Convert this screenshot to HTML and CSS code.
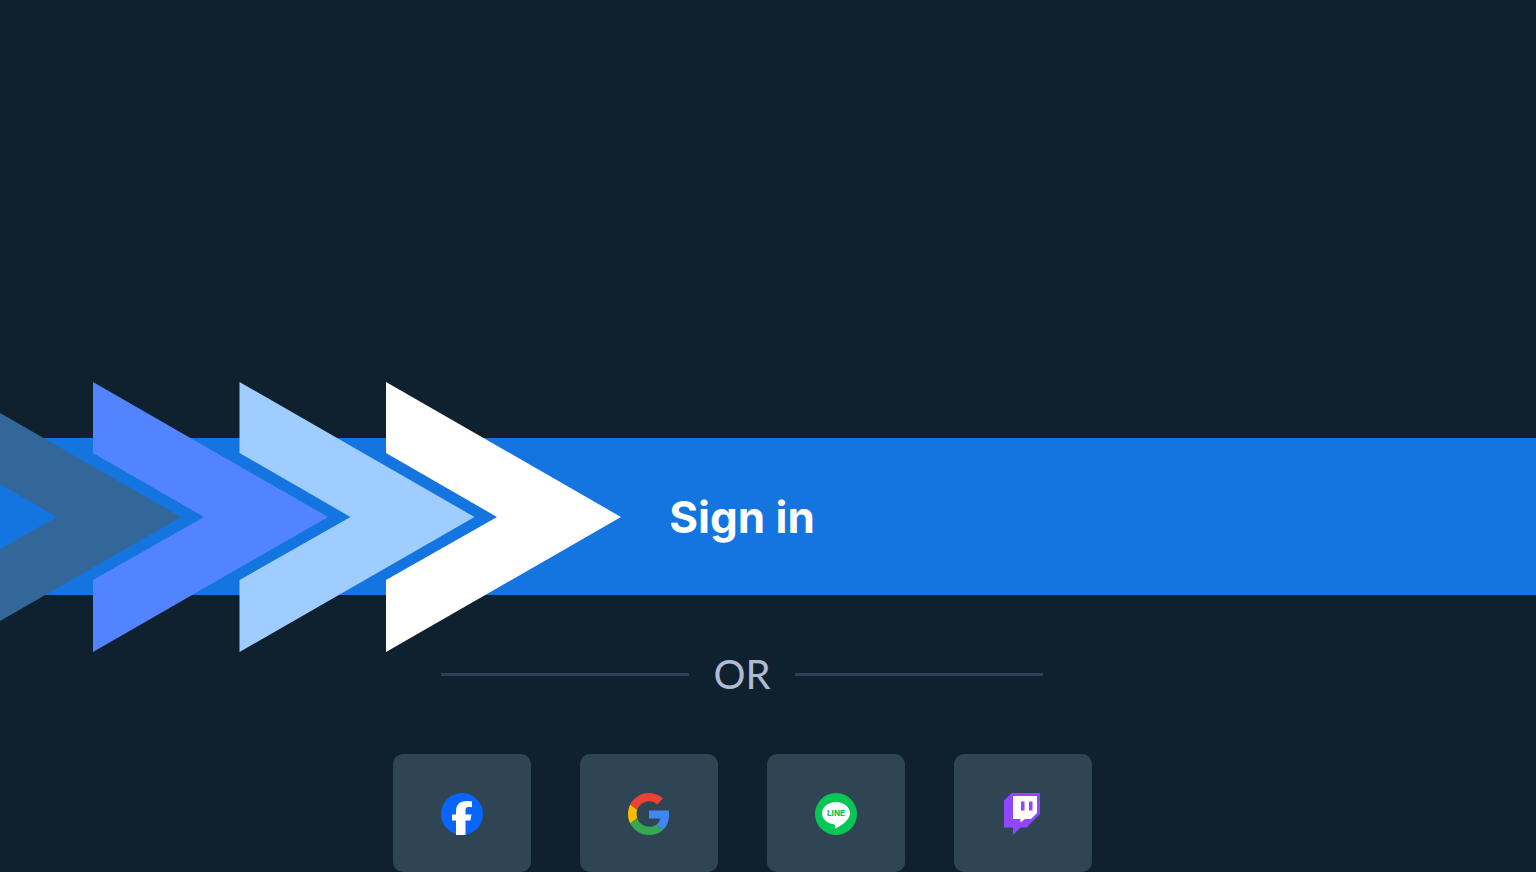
FILE: index.html
```
<!DOCTYPE html>
<html lang="en">
<head>
    <meta charset="UTF-8">
    <meta name="viewport" content="width=device-width, initial-scale=1.0">
    <title>Sign in</title>
    <link rel="stylesheet" href="styles.css">
</head>
<body>

<main class="login">
    <div class="signin">
        <button type="submit" class="signin-button">Sign in</button>

        <!-- Arrows pointing at the button label -->
        <svg class="arrows" viewBox="0 0 621 270" aria-hidden="true">
            <path fill="#336799" d="M-54 0L181 135L-54 270V198L57 135L-54 71Z"/>
            <path fill="#5384ff" d="M93 0L328 135L93 270V198L204 135L93 71Z"/>
            <path fill="#a0cdff" d="M239.500 0L474.500 135L239.500 270V198L350.500 135L239.500 71Z"/>
            <path fill="#ffffff" d="M386 0L621 135L386 270V198L497 135L386 71Z"/>
        </svg>
    </div>

    <div class="divider">OR</div>

    <!-- Social login -->
    <div class="social">
        <button type="button" class="social-button" aria-label="Sign in with Facebook">
            <svg viewBox="0 0 42 42">
                <circle cx="21" cy="21" r="21" fill="#0866ff"/>
                <path fill="#fff" d="M15 42V27.500H11V21.500H15V19C15 11.500 18.500 8 26 8C28 8 30 8.200 31 8.600V14.300C30 14.100 29 14 28 14C25 14 24.500 15.200 24.500 18.500V21.500H30.500L29.400 27.500H24.500V42Z"/>
            </svg>
        </button>
        <button type="button" class="social-button" aria-label="Sign in with Google">
            <svg viewBox="0 0 48 48">
                <path fill="#ea4335" d="M24 9.500c3.540 0 6.710 1.220 9.210 3.600l6.850-6.850C35.900 2.380 30.470 0 24 0 14.620 0 6.510 5.380 2.560 13.220l7.980 6.190C12.430 13.720 17.740 9.500 24 9.500z"/>
                <path fill="#4285f4" d="M46.980 24.550c0-1.570-.15-3.090-.38-4.550H24v9.020h12.940c-.58 2.960-2.260 5.480-4.780 7.180l7.730 6c4.510-4.180 7.090-10.360 7.090-17.650z"/>
                <path fill="#fbbc05" d="M10.530 28.590c-.48-1.450-.76-2.990-.76-4.590s.27-3.140.76-4.590l-7.980-6.190C.92 16.460 0 20.120 0 24c0 3.880.92 7.540 2.560 10.780l7.970-6.190z"/>
                <path fill="#34a853" d="M24 48c6.480 0 11.930-2.130 15.890-5.810l-7.730-6c-2.150 1.450-4.920 2.300-8.160 2.300-6.260 0-11.570-4.220-13.470-9.910l-7.980 6.190C6.510 42.620 14.620 48 24 48z"/>
            </svg>
        </button>
        <button type="button" class="social-button" aria-label="Sign in with LINE">
            <svg viewBox="0 0 42 42">
                <circle cx="21" cy="21" r="21" fill="#06c755"/>
                <path fill="#fff" d="M21 9C13.300 9 7 14 7 20.200C7 25.700 12 30.300 18.600 31.200C20.500 31.600 20.200 32.500 19.900 34.600C19.800 35.300 20.300 35.600 21 35.200C25 33 35 27.500 35 20.200C35 14 28.700 9 21 9Z"/>
                <text class="line-text" x="21" y="23" text-anchor="middle">LINE</text>
            </svg>
        </button>
        <button type="button" class="social-button" aria-label="Sign in with Twitch">
            <svg viewBox="0 0 42 42">
                <path fill="#9146ff" d="M9.500 0L2 7.500V34.500H11V42L18.500 34.500H24.500L38 21V0Z"/>
                <path fill="#fff" d="M11 3H35V20L29 26H23L18.500 29.500V26H11Z"/>
                <path fill="#9146ff" d="M19 8.500H22.500V17.500H19ZM27 8.500H30.500V17.500H27Z"/>
            </svg>
        </button>
    </div>
</main>

</body>
</html>
```
FILE: styles.css
```
* {
    box-sizing: border-box;
}
body {
    margin: 0;
    background-color: #0f212e;
    font-family: Lato, "Liberation Sans", sans-serif;
}
button {
    border: none;
    font-family: Inter, "Liberation Sans", sans-serif;
    cursor: pointer;
}
.login {
    min-height: 100vh;
    display: flex;
    flex-direction: column;
    justify-content: flex-end;
}
.signin {
    position: relative;
}
.signin-button {
    display: block;
    width: 100%;
    padding: 49px 52px 48px 0;
    background-color: #1475e1;
    color: white;
    font-size: 44px;
    font-weight: bold;
    line-height: 60px;
}
.signin-button:hover {
    background-color: #1067c9;
}
.arrows {
    position: absolute;
    left: 0;
    top: 50%;
    width: 621px;
    height: 270px;
    transform: translateY(-50%);
    pointer-events: none;
}
.divider {
    display: flex;
    align-items: center;
    align-self: center;
    gap: 24px;
    width: 602px;
    max-width: 100%;
    margin: 55px 52px 55px 0;
    color: #b1bad3;
    font-size: 40px;
    line-height: 49px;
}
.divider::before,
.divider::after {
    content: "";
    flex: 1;
    height: 3px;
    background-color: #2f4053;
}
.social {
    display: flex;
    justify-content: center;
    gap: 49px;
    padding-right: 52px;
}
.social-button {
    display: flex;
    justify-content: center;
    align-items: center;
    width: 138px;
    height: 118px;
    padding: 2px 0 0;
    border-radius: 10px;
    background-color: #2f4553;
}
.social-button:hover {
    background-color: #3d5564;
}
.social-button svg {
    width: 42px;
    height: 42px;
}
.line-text {
    fill: #06c755;
    font-size: 8px;
    font-weight: 800;
}
```
